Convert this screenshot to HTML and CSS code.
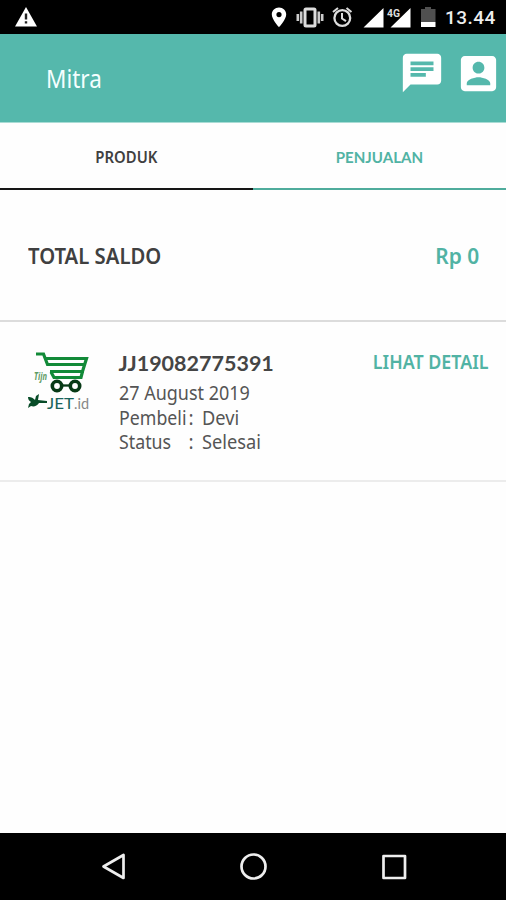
FILE: index.html
```
<!DOCTYPE html>
<html lang="id">
<head>
<meta charset="utf-8">
<title>Mitra</title>
<link rel="stylesheet" href="styles.css">
</head>
<body>
<div class="screen">
  <div class="status">
    <svg class="status-warning" width="22" height="20" viewBox="0 0 22 20"><path fill="#fff" d="M11 0 22 19.5H0z"/><path fill="#222" d="M9.8 6.5h2.4v6H9.8zm0 7.7h2.4v2.4H9.8z"/></svg>
    <svg class="status-icons" width="170" height="34" viewBox="270 0 170 34">
      <path fill="#fff" fill-rule="evenodd" d="M279 7.500c-4 0-7.200 3-7.200 7 0 5 7.200 12.700 7.200 12.700s7.200-7.700 7.200-12.700c0-4-3.200-7-7.200-7zm0 4.500a2.600 2.600 0 1 1 0 5.200 2.600 2.600 0 0 1 0-5.200z"/>
      <rect x="305" y="9" width="10" height="17" rx="1" fill="none" stroke="#ddd" stroke-width="3"/>
      <path fill="none" stroke="#ccc" stroke-width="2.600" d="M301.200 11.500v12M318.800 11.500v12M297.800 14v7M322.200 14v7"/>
      <circle cx="342.300" cy="18" r="7.900" fill="none" stroke="#ddd" stroke-width="2.300"/>
      <path fill="none" stroke="#ddd" stroke-width="2" d="M342 13v5.500l4 2.700M333 12l5-4M351.500 12l-5-4"/>
      <path fill="#fff" d="M383.500 8v19.500h-20zM410.500 8v19.500h-20z"/>
      <path fill="#000" d="M386 5h14.500v11l-5 4.500-1-2.500h-8.500z"/>
      <text class="network" x="387" y="16.500" textLength="13" lengthAdjust="spacingAndGlyphs">4G</text>
      <path fill="#505050" d="M421 9h4V7h6v2h4.500v13H421z"/><path fill="#fff" d="M421 22h14.500v5H421z"/>
    </svg>
    <span class="clock">13.44</span>
  </div>

  <header class="appbar">
    <h1 class="title fit fit-title">Mitra</h1>
    <div class="actions">
      <svg width="46" height="46" viewBox="0 0 24 24"><path fill="#fff" d="M20 2H4c-1.100 0-2 .9-2 2v18l4-4h14c1.100 0 2-.9 2-2V4c0-1.100-.9-2-2-2zM6 9h12v2H6V9zm8 5H6v-2h8v2zm4-6H6V6h12v2z"/></svg>
      <svg width="47" height="47" viewBox="0 0 24 24"><path fill="#fff" d="M3 5v14c0 1.100.89 2 2 2h14c1.100 0 2-.9 2-2V5c0-1.100-.9-2-2-2H5c-1.110 0-2 .9-2 2zm12 4c0 1.660-1.340 3-3 3s-3-1.340-3-3 1.340-3 3-3 3 1.340 3 3zm-9 8c0-2 4-3.100 6-3.100s6 1.100 6 3.100v1H6v-1z"/></svg>
    </div>
  </header>

  <nav class="tabs">
    <div class="tab"><span class="fit fit-produk">PRODUK</span></div>
    <div class="tab tab-active"><span class="fit fit-penjualan">PENJUALAN</span></div>
  </nav>

  <section class="balance">
    <span class="fit fit-total">TOTAL SALDO</span>
    <span class="amount fit fit-amount">Rp 0</span>
  </section>

  <article class="order">
    <svg class="logo" width="64" height="62" viewBox="0 0 64 62">
      <g fill="none" stroke="#128a38" stroke-width="3.200">
        <path d="M8 4h7.500l4 10.500h37"/><path d="M17 8.500h41.500l-4 13h-32.500"/><path d="M23 22l3 5.500h27l1.500-6"/>
      </g>
      <g fill="none" stroke="#073a16" stroke-width="3.600"><circle cx="29" cy="36" r="4.700"/><circle cx="47" cy="36" r="4.700"/><path d="M35 35.500h7" stroke-width="2.300"/></g>
      <text class="logo-tagline" x="6" y="30" textLength="13" lengthAdjust="spacingAndGlyphs">Tijn</text>
      <path fill="#084c28" d="M0 47c4 0 5 1 7 3l1-4 3-2-1 6 9 1v2h-8c-2 3-5 4-8 3l-3 2 1-4 2-2c-2-1-3-3-3-5z"/>
      <text class="logo-name" x="19" y="58.500" textLength="27" lengthAdjust="spacingAndGlyphs">JET</text>
      <text class="logo-domain" x="46" y="58.500" textLength="15" lengthAdjust="spacingAndGlyphs">.id</text>
    </svg>
    <div class="details">
      <div class="code"><span class="fit fit-code">JJ19082775391</span></div>
      <div class="line"><span class="fit fit-date">27 August 2019</span></div>
      <div class="line row"><span class="label"><span class="fit fit-label">Pembeli</span></span><span class="colon">:</span><span class="fit fit-value">Devi</span></div>
      <div class="line row"><span class="label"><span class="fit fit-label">Status</span></span><span class="colon">:</span><span class="fit fit-value">Selesai</span></div>
    </div>
    <span class="more fit fit-more">LIHAT DETAIL</span>
  </article>

  <footer class="navbar">
    <svg width="506" height="67" viewBox="0 0 506 67" fill="none" stroke="#eee" stroke-width="2.700" stroke-linejoin="round">
      <path d="M103.500 33.500l20-11.500v23z"/><circle cx="253.500" cy="33.500" r="12"/><rect x="383.500" y="23" width="21.500" height="22"/>
    </svg>
  </footer>
</div>
</body>
</html>
```
FILE: styles.css
```
* { box-sizing: border-box; }
body { margin: 0; background: #fefefe; font-family: "Noto Sans", "Open Sans", sans-serif; color: #404040; }
svg { display: block; flex: none; }
.screen { display: flex; flex-direction: column; width: 506px; height: 900px; }

/* Condensed text: each fit class sets its own horizontal scale */
.fit { display: inline-block; white-space: nowrap; transform-origin: left center; }
.fit-title { transform: scaleX(.9); }
.fit-produk { transform: scaleX(.93); }
.fit-total { transform: scaleX(.922); }
.fit-amount { transform: scaleX(.95); }
.fit-date { transform: scaleX(.945); }
.fit-label { transform: scaleX(.935); }
.fit-value { transform: scaleX(.96); }
.fit-more { transform: scaleX(.893); }

.status { display: flex; height: 34px; background: #000; color: #eee; }
.status-warning { margin: 7px 0 0 15px; }
.status-icons { margin-left: 233px; }
.network { font: bold 11px Roboto, sans-serif; fill: #ddd; }
.clock { margin-left: 5px; font: 500 19px/36px Roboto, sans-serif; letter-spacing: .45px; }

.appbar { display: flex; justify-content: space-between; height: 89px; padding: 0 4px 0 46px; background: #55b8ac; border-bottom: 1px solid #a9dcd5; }
.title { margin: 0; font-size: 25px; font-weight: 400; line-height: 89px; color: #f4ffff; }
.actions { display: flex; gap: 10px; padding-top: 16px; }

.tabs { display: flex; height: 67px; }
.tab { flex: 1; border-bottom: 2px solid #161616; text-align: center; font-size: 16px; font-weight: 600; line-height: 68px; }
.tab .fit { transform-origin: center; }
.tab-active { border-color: #4fac9c; color: #51b3a4; }
.fit-penjualan { font-family: Lato, sans-serif; font-weight: 700; transform: scaleX(.94); }

.balance { display: flex; justify-content: space-between; align-items: center; height: 132px; padding: 0 27px 0 28px; border-bottom: 2px solid #dcdcdc; font-size: 22px; font-weight: 600; }
.amount { color: #51b3a4; }
.balance .amount, .more { transform-origin: right center; }

.order { display: flex; height: 160px; padding: 28px 17px 0 28px; border-bottom: 2px solid #ececec; }
.details { width: 180px; margin-left: 26.500px; font-size: 19px; line-height: 24.500px; color: #555; }
.code { height: 31px; font-family: Lato, sans-serif; font-size: 21.500px; font-weight: 700; line-height: 27px; color: #454545; }
.row { display: flex; }
.label { width: 70px; }
.colon { width: 13px; }
.more { margin-left: auto; font-size: 20px; font-weight: 600; line-height: 23px; color: #51b3a4; }

.navbar { height: 67px; margin-top: auto; background: #000; }

.logo-tagline { font: italic bold 10px "Noto Sans", sans-serif; fill: #5d9b65; }
.logo-name { font: 15px Lato, sans-serif; fill: #19645b; }
.logo-domain { font: 15px Lato, sans-serif; fill: #888; }
```
